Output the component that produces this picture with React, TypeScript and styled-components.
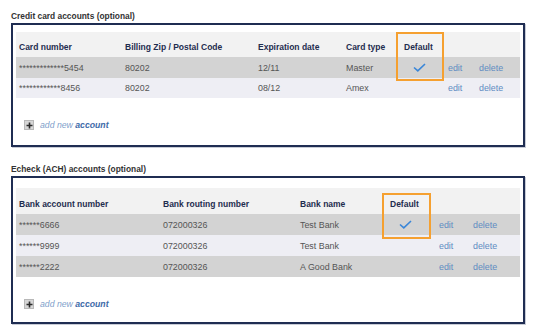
import styled, { createGlobalStyle } from 'styled-components'

const Global = createGlobalStyle`
  html, body {
    margin: 0;
    padding: 0;
    background: #fff;
    font-family: 'Liberation Sans', Arial, sans-serif;
  }
`

const Page = styled.div`
  width: 533px;
  height: 335px;
  padding: 11px 8px 0 11px;
  box-sizing: border-box;
`

const Section = styled.section<{ gap?: number }>`
  margin-bottom: ${(p) => p.gap ?? 0}px;
`

const Title = styled.h2`
  margin: 0 0 2px;
  font-size: 8.4px;
  line-height: 10px;
  font-weight: bold;
  color: #333;
`

const Box = styled.div<{ padTop: number; height: number }>`
  width: 514px;
  height: ${(p) => p.height}px;
  box-sizing: border-box;
  border: 2px solid #1f2d52;
  box-shadow: 1px 1px 0 #c8ccd6;
  padding: ${(p) => p.padTop}px 3px 0 3px;
`

const Table = styled.div`
  position: relative;
`

const Row = styled.div<{ cols: string; bg: string; h: number; header?: boolean }>`
  display: grid;
  grid-template-columns: ${(p) => p.cols};
  height: ${(p) => p.h}px;
  background: ${(p) => p.bg};
  align-items: ${(p) => (p.header ? 'end' : 'center')};
  padding-bottom: ${(p) => (p.header ? 5 : 0)}px;
  box-sizing: border-box;
  font-size: ${(p) => (p.header ? 8.5 : 8.9)}px;
  color: ${(p) => (p.header ? '#1f2d4f' : '#555')};
  font-weight: ${(p) => (p.header ? 'bold' : 'normal')};
`

const Cell = styled.div<{ indent?: number }>`
  padding-left: ${(p) => p.indent ?? 3}px;
  white-space: nowrap;
  display: flex;
  align-items: center;
`

const Link = styled.span`
  color: #5f8cc2;
`

const Highlight = styled.div<{ left: number; top: number; w: number; h: number }>`
  position: absolute;
  left: ${(p) => p.left}px;
  top: ${(p) => p.top}px;
  width: ${(p) => p.w}px;
  height: ${(p) => p.h}px;
  box-sizing: border-box;
  border: 2px solid #f5a030;
  pointer-events: none;
`

const AddRow = styled.div<{ top: number }>`
  display: flex;
  align-items: center;
  gap: 6px;
  margin: ${(p) => p.top}px 0 0 8px;
  font-size: 8.7px;
  font-style: italic;
`

const PlusBox = styled.span`
  width: 10px;
  height: 10px;
  background: #d6d6d6;
  border: 1px solid #b8b8b8;
  box-sizing: border-box;
  display: flex;
  align-items: center;
  justify-content: center;
`

const AddText = styled.span`
  color: #7f9fcb;
  b {
    color: #3d6aa8;
    font-weight: bold;
  }
`

const Check = () => (
  <svg width="13" height="9" viewBox="0 0 13 9">
    <path d="M1 4.5 L4.8 7.8 L12 1" fill="none" stroke="#3a86d8" strokeWidth="1.6" />
  </svg>
)

const Plus = () => (
  <svg width="7" height="7" viewBox="0 0 7 7">
    <path d="M3.5 0.5 V6.5 M0.5 3.5 H6.5" stroke="#2a2a2a" strokeWidth="1.6" />
  </svg>
)

const AddNew = ({ top }: { top: number }) => (
  <AddRow top={top}>
    <PlusBox>
      <Plus />
    </PlusBox>
    <AddText>
      add new <b>account</b>
    </AddText>
  </AddRow>
)

const GREY = '#d3d3d3'
const LIGHT = '#eeeef4'
const HEAD = '#f2f2f2'

const cardCols = '106px 133px 88px 58px 44px 31px 1fr'
const cards = [
  { num: '*************5454', zip: '80202', exp: '12/11', type: 'Master', def: true },
  { num: '************8456', zip: '80202', exp: '08/12', type: 'Amex', def: false },
]

const bankCols = '144px 137px 90px 49px 34px 1fr'
const banks = [
  { num: '******6666', routing: '072000326', name: 'Test Bank', def: true },
  { num: '******9999', routing: '072000326', name: 'Test Bank', def: false },
  { num: '******2222', routing: '072000326', name: 'A Good Bank', def: false },
]

export default function App() {
  return (
    <Page>
      <Global />
      <Section gap={17}>
        <Title>Credit card accounts (optional)</Title>
        <Box padTop={7} height={124}>
          <Table>
            <Row cols={cardCols} bg={HEAD} h={25} header>
              <Cell>Card number</Cell>
              <Cell>Billing Zip / Postal Code</Cell>
              <Cell>Expiration date</Cell>
              <Cell>Card type</Cell>
              <Cell>Default</Cell>
              <Cell />
              <Cell />
            </Row>
            {cards.map((c, i) => (
              <Row key={c.num} cols={cardCols} bg={i % 2 === 0 ? GREY : LIGHT} h={i === 0 ? 21 : 20}>
                <Cell>{c.num}</Cell>
                <Cell>{c.zip}</Cell>
                <Cell>{c.exp}</Cell>
                <Cell>{c.type}</Cell>
                <Cell indent={12}>{c.def && <Check />}</Cell>
                <Cell>
                  <Link>edit</Link>
                </Cell>
                <Cell>
                  <Link>delete</Link>
                </Cell>
              </Row>
            ))}
            <Highlight left={380} top={0} w={48} h={49} />
          </Table>
          <AddNew top={22} />
        </Box>
      </Section>
      <Section>
        <Title>Echeck (ACH) accounts (optional)</Title>
        <Box padTop={10} height={148}>
          <Table>
            <Row cols={bankCols} bg={HEAD} h={26} header>
              <Cell>Bank account number</Cell>
              <Cell>Bank routing number</Cell>
              <Cell>Bank name</Cell>
              <Cell>Default</Cell>
              <Cell />
              <Cell />
            </Row>
            {banks.map((b, i) => (
              <Row key={b.num} cols={bankCols} bg={i % 2 === 0 ? GREY : LIGHT} h={21}>
                <Cell>{b.num}</Cell>
                <Cell>{b.routing}</Cell>
                <Cell>{b.name}</Cell>
                <Cell indent={12}>{b.def && <Check />}</Cell>
                <Cell>
                  <Link>edit</Link>
                </Cell>
                <Cell>
                  <Link>delete</Link>
                </Cell>
              </Row>
            ))}
            <Highlight left={366} top={5} w={49} h={46} />
          </Table>
          <AddNew top={22} />
        </Box>
      </Section>
    </Page>
  )
}
